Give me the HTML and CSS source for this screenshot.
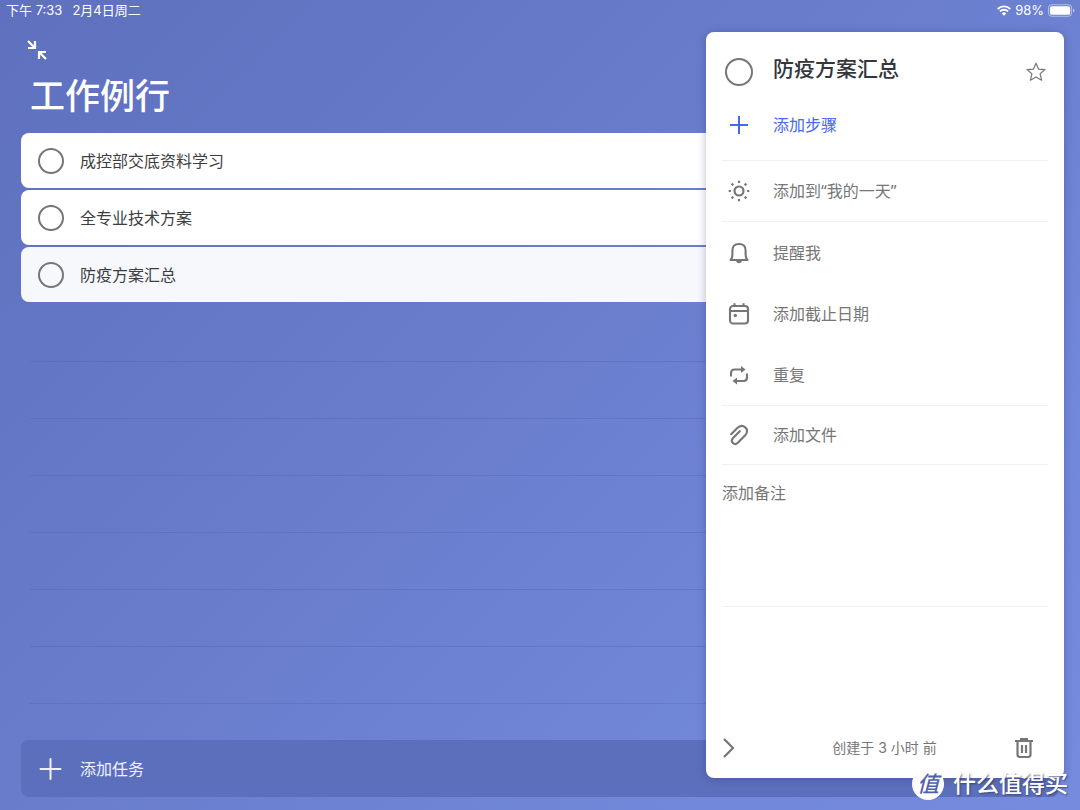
FILE: index.html
```html
<!DOCTYPE html>
<html lang="zh-CN">
<head>
<meta charset="utf-8">
<meta name="viewport" content="width=device-width, initial-scale=1">
<title>工作例行</title>
<link rel="stylesheet" href="styles.css">
</head>
<body>
<div class="app">
  <header class="status">
    <div class="status-left"><span>下午 7:33</span><span>2月4日周二</span></div>
    <div class="status-right">
      <svg class="wifi" viewBox="0 0 14 11" aria-hidden="true"><path d="M.7 4a9 9 0 0 1 12.6 0M2.9 6.4a5.9 5.9 0 0 1 8.2 0" fill="none" stroke="currentColor" stroke-width="1.8"/><path d="M4.8 8.4a3.2 3.2 0 0 1 4.4 0L7 10.7z" fill="currentColor"/></svg>
      <span>98%</span>
      <svg class="battery" viewBox="0 0 28 13" aria-hidden="true"><rect x=".5" y=".5" width="24" height="12" rx="3.5" fill="none" stroke="currentColor" stroke-opacity=".5"/><rect x="2" y="2" width="21" height="9" rx="2" fill="currentColor"/><path d="M26 4.5q1.5.6 1.5 2t-1.5 2z" fill="currentColor" fill-opacity=".5"/></svg>
    </div>
  </header>

  <main class="list">
    <button class="collapse" aria-label="退出全屏">
      <svg viewBox="0 0 20 20" aria-hidden="true"><path d="M1 1l6.500 6.500M8 1v7H1M19 19l-6.500-6.500M12 19v-7h7" fill="none" stroke="currentColor" stroke-width="2.200"/></svg>
    </button>
    <h1 class="list-title">工作例行</h1>
    <ul class="tasks">
      <li><label class="task"><input class="check" type="checkbox"><span>成控部交底资料学习</span></label></li>
      <li><label class="task"><input class="check" type="checkbox"><span>全专业技术方案</span></label></li>
      <li><label class="task task-selected"><input class="check" type="checkbox"><span>防疫方案汇总</span></label></li>
    </ul>
    <div class="ruled" aria-hidden="true"></div>
    <button class="add-task">
      <svg viewBox="0 0 22 22" aria-hidden="true"><path d="M11 1v20M1 11h20" stroke="currentColor" stroke-width="2" stroke-linecap="round"/></svg>
      <span>添加任务</span>
    </button>
  </main>

  <aside class="detail" aria-label="任务详情">
    <div class="detail-head">
      <input class="check check-large" type="checkbox" id="done">
      <label class="detail-title" for="done">防疫方案汇总</label>
      <button class="star" aria-label="标记为重要"><svg viewBox="0 0 20 20" aria-hidden="true"><path d="M10 1.200l2.500 5.900 6.500.5-4.900 4.200 1.500 6.400L10 15l-5.600 3.200 1.500-6.400L1 7.600l6.500-.5z" fill="none" stroke="currentColor" stroke-width="1.200" stroke-linejoin="round"/></svg></button>
    </div>
    <div class="group group-step">
      <button class="row row-step"><svg viewBox="0 0 22 22" aria-hidden="true"><path d="M11 2v18M2 11h18" stroke="currentColor" stroke-width="2"/></svg><span>添加步骤</span></button>
    </div>
    <div class="group">
      <button class="row"><svg viewBox="0 0 22 22" aria-hidden="true"><circle cx="11" cy="11" r="4.500" fill="none" stroke="currentColor" stroke-width="2.200"/><path d="M11 .7v2.200M11 19.100v2.200M.7 11h2.200M19.100 11h2.200M3.600 3.600l1.700 1.700M16.700 16.700l1.700 1.700M3.600 18.400l1.700-1.700M16.700 5.300l1.700-1.700" stroke="currentColor" stroke-width="2.200"/></svg><span>添加到“我的一天”</span></button>
    </div>
    <div class="group group-dates">
      <button class="row"><svg viewBox="0 0 22 22" aria-hidden="true"><path d="M2.600 18c1.300-1.300 1.800-2.700 1.800-5.300V8.500C4.400 4.300 7 2 11 2s6.600 2.300 6.600 6.500v4.200c0 2.600.5 4 1.800 5.300z" fill="none" stroke="currentColor" stroke-width="2.100" stroke-linejoin="round"/><path d="M8 18.500h6c-.3 1.800-1.400 2.700-3 2.700s-2.700-.9-3-2.700z" fill="currentColor"/></svg><span>提醒我</span></button>
      <button class="row"><svg viewBox="0 0 22 22" aria-hidden="true"><rect x="2" y="3" width="18" height="17.500" rx="3" fill="none" stroke="currentColor" stroke-width="2.100"/><path d="M2 8h18M6.500 .3V3M15.500 .3V3" stroke="currentColor" stroke-width="2.100"/><circle cx="7.300" cy="12.400" r="1.700" fill="currentColor"/></svg><span>添加截止日期</span></button>
      <button class="row"><svg viewBox="0 0 22 22" aria-hidden="true"><path d="M3 12.500V9q0-3.500 3.500-3.500h8M19 9.500v4q0 3.500-3.500 3.500H8" fill="none" stroke="currentColor" stroke-width="2.100"/><path d="M13 2l4.500 3.500L13 9zM9 13.500L4.500 17 9 20.500z" fill="currentColor"/></svg><span>重复</span></button>
    </div>
    <div class="group group-file">
      <button class="row"><svg viewBox="0 0 22 22" aria-hidden="true"><path d="M3.200 10.200l6.100-6.100c2.600-2.600 5.800-2.500 8-.7 2.200 2 2.400 5.200.2 7.500l-7.700 7.900c-1.500 1.500-3.600 1.500-4.900.2s-1.300-3.400.1-4.900l6.800-6.900" fill="none" stroke="currentColor" stroke-width="2.100" stroke-linecap="round"/></svg><span>添加文件</span></button>
    </div>
    <textarea class="notes" aria-label="备注" placeholder="添加备注"></textarea>
    <footer class="detail-foot">
      <button class="foot-button" aria-label="关闭详情"><svg viewBox="0 0 22 22" aria-hidden="true"><path d="M2 2l9 9-9 9" fill="none" stroke="currentColor" stroke-width="2.200"/></svg></button>
      <span class="created">创建于 3 小时 前</span>
      <button class="foot-button" aria-label="删除任务"><svg viewBox="0 0 22 22" aria-hidden="true"><path d="M2 4h18M8 4V2h6v2M4.500 4v13.500q0 2.500 2.500 2.500h8q2.500 0 2.500-2.500V4M9 8v8M13 8v8" fill="none" stroke="currentColor" stroke-width="2.200"/></svg></button>
    </footer>
  </aside>

  <div class="watermark"><span class="watermark-mark">值</span><span>什么值得买</span></div>
</div>
</body>
</html>
```

FILE: styles.css
```css
* {
  box-sizing: border-box;
}

body {
  margin: 0;
  font-family: Inter, "Noto Sans CJK SC", sans-serif;
  font-size: 16px;
  line-height: 24px;
  color: #3c3e44;
}

button {
  border: 0;
  padding: 0;
  background: none;
  font: inherit;
  color: inherit;
  cursor: pointer;
}

svg {
  display: block;
  flex: none;
  overflow: visible;
}

.app {
  position: relative;
  display: flex;
  flex-direction: column;
  min-height: 100vh;
  background: linear-gradient(135deg, #5e70be 0%, #697dcc 45%, #7288da 80%, #768ade 100%);
}

.status {
  display: flex;
  justify-content: space-between;
  padding: 0 5px 0 6px;
  font-size: 13px;
  line-height: 20px;
  color: #fff;
}

.status-left {
  display: flex;
  gap: 10px;
}

.status-right {
  display: flex;
  align-items: center;
  gap: 4px;
}

.wifi {
  width: 14px;
  height: 11px;
}

.battery {
  width: 27px;
  height: 13px;
}

.list {
  display: flex;
  flex: 1;
  flex-direction: column;
  padding: 20px 21px 13px;
}

.collapse {
  align-self: flex-start;
  margin-left: 6px;
  color: #fff;
}

.collapse svg {
  width: 20px;
  height: 20px;
}

.list-title {
  margin: 12px 0 13px 9px;
  font-size: 35px;
  font-weight: 500;
  line-height: 48px;
  color: #fff;
}

.tasks {
  display: flex;
  flex-direction: column;
  gap: 2px;
  margin: 0;
  padding: 0;
  list-style: none;
}

.task {
  display: flex;
  align-items: center;
  gap: 16px;
  height: 55px;
  padding: 1px 17px 0;
  border-radius: 8px;
  background: #fff;
}

.task-selected {
  background: #f6f8fc;
}

.check {
  flex: none;
  appearance: none;
  width: 26px;
  height: 26px;
  margin: 0;
  border: 2px solid #767676;
  border-radius: 50%;
}

.check-large {
  width: 28px;
  height: 28px;
}

.ruled {
  flex: 1;
  min-height: 171px;
  margin: 3px 9px 36px;
  background: repeating-linear-gradient(transparent 0 56px, rgba(70, 85, 165, 0.25) 56px 57px);
}

.add-task {
  display: flex;
  align-items: center;
  gap: 18px;
  height: 57px;
  padding: 0 18px;
  border-radius: 8px;
  background: #5c6fbc;
  color: #f0f2fb;
}

.add-task svg {
  width: 23px;
  height: 22px;
}

.detail {
  position: absolute;
  top: 32px;
  right: 16px;
  bottom: 32px;
  display: flex;
  flex-direction: column;
  width: 358px;
  padding: 16px 16px 14px;
  border-radius: 8px;
  background: #fff;
  box-shadow: 0 1px 8px rgba(30, 40, 90, 0.3);
  color: #767676;
}

.detail-head {
  display: flex;
  align-items: center;
  gap: 20px;
  height: 48px;
  padding: 0 2px 0 3px;
}

.detail-title {
  flex: 1;
  padding-bottom: 6px;
  font-size: 21px;
  font-weight: 500;
  line-height: 32px;
  color: #33363d;
}

.star svg {
  width: 20px;
  height: 20px;
}

.group {
  border-bottom: 1px solid #f0f0f0;
}

.row {
  display: flex;
  align-items: center;
  gap: 23px;
  width: 100%;
  height: 60px;
  padding: 0 6px;
  font-family: "Noto Sans", "Noto Sans CJK SC", sans-serif;
  text-align: left;
}

.row svg {
  width: 22px;
  height: 22px;
}

.group-step {
  padding-bottom: 6px;
}

.row-step {
  height: 58px;
  color: #4568f0;
}

.group-dates .row {
  height: 61px;
}

.group-file .row {
  height: 58px;
}

.notes {
  height: 142px;
  margin: 0;
  padding: 16px 0;
  border: 0;
  border-bottom: 1px solid #f0f0f0;
  background: none;
  font: inherit;
  color: #33363d;
  resize: none;
}

.notes::placeholder {
  color: #767676;
}

.detail-foot {
  display: flex;
  align-items: center;
  justify-content: space-between;
  margin-top: auto;
  padding-right: 13px;
  font-size: 14px;
  line-height: 32px;
}

.created {
  padding-left: 12px;
}

.foot-button svg {
  width: 22px;
  height: 22px;
}

.watermark {
  position: absolute;
  right: 12px;
  bottom: 10px;
  display: flex;
  align-items: center;
  gap: 9px;
  font-size: 23px;
  font-weight: 500;
  line-height: 32px;
  color: #fff;
  text-shadow: 1px 1px 2px rgba(40, 50, 90, 0.7);
}

.watermark-mark {
  width: 32px;
  border-radius: 50%;
  background: #fff;
  color: #5062ab;
  font-size: 22px;
  font-style: italic;
  text-align: center;
  text-shadow: none;
}
```
